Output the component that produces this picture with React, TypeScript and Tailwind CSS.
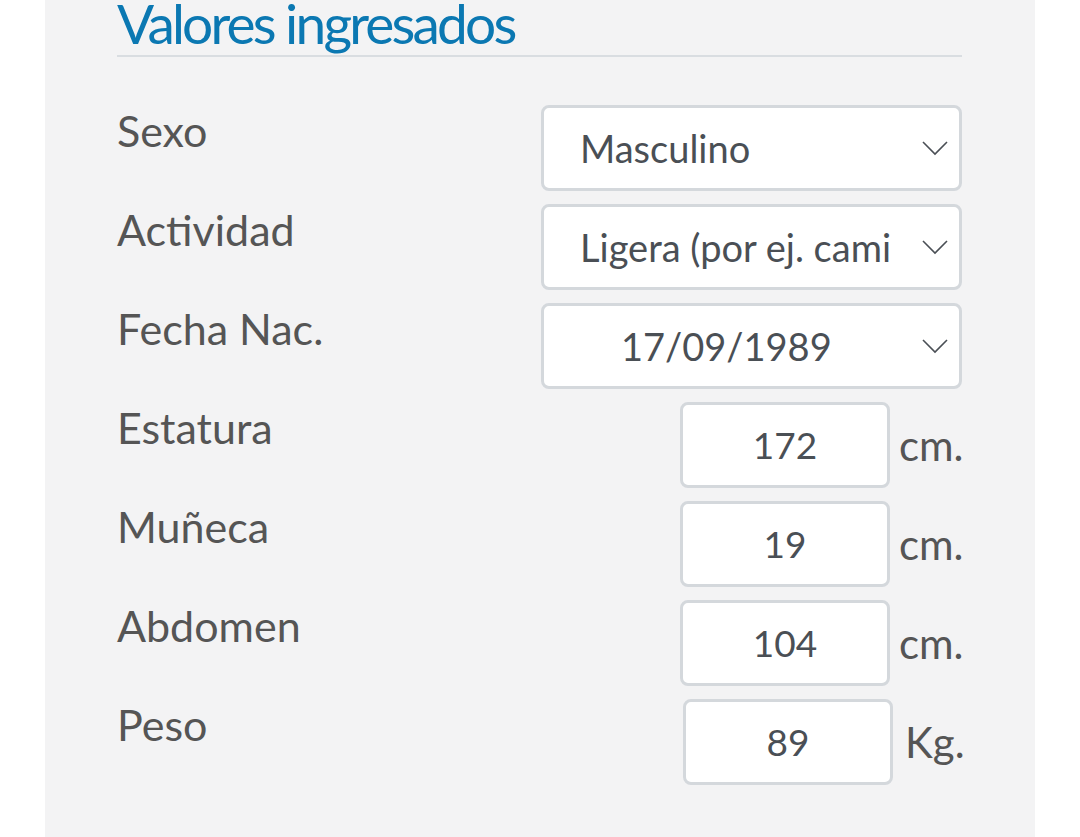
import React from "react";

const font = { fontFamily: "Lato, 'Noto Sans', sans-serif" };

function Chevron() {
  return (
    <svg width="28" height="16" viewBox="0 0 28 16" fill="none" className="shrink-0">
      <polyline points="2,2 14,14 26,2" stroke="#4a4f55" strokeWidth="1.6" fill="none" />
    </svg>
  );
}

function SelectRow({ label, value, center }: { label: string; value: string; center?: boolean }) {
  return (
    <div className="flex items-start justify-between h-[86px]">
      <div className="text-[43px] leading-[52px] text-[#555555]">{label}</div>
      <div className="w-[421px] h-[86px] bg-white border-[3px] border-[#d4d8dc] rounded-[8px] flex items-center pl-[36px] pr-[10px]">
        <div className={"flex-1 text-[38px] text-[#4a4f55] whitespace-nowrap overflow-hidden " + (center ? "pl-[41px]" : "")}>{value}</div>
        <Chevron />
      </div>
    </div>
  );
}

function InputRow({ label, value, unit, kg }: { label: string; value: string; unit: string; kg?: boolean }) {
  return (
    <div className="flex items-start justify-between h-[86px]">
      <div className="text-[43px] leading-[52px] text-[#555555]">{label}</div>
      <div className={"flex items-center h-[86px] " + (kg ? "gap-[12px]" : "gap-[9px]")}>
        <div className="w-[210px] h-[86px] bg-white border-[3px] border-[#d4d8dc] rounded-[8px] flex items-center justify-center text-[37px] text-[#4a4f55]">
          {value}
        </div>
        <div className={"text-[42px] text-[#555555] " + (kg ? "w-[57px]" : "w-[63px]")}>{unit}</div>
      </div>
    </div>
  );
}

export default function App() {
  return (
    <div className="w-[1080px] h-[837px] bg-white overflow-hidden" style={font}>
      <div className="ml-[45px] w-[990px] h-[837px] bg-[#f3f3f4] pl-[72px] pr-[73px] pt-0">
        <div className="text-[55px] leading-[47px] text-[#0b78b2] tracking-[-2.8px] whitespace-nowrap">Valores ingresados</div>
        <div className="h-[2px] bg-[#d9dde1] mt-[8px]" />
        <div className="mt-[48px] flex flex-col gap-[13px]">
          <SelectRow label="Sexo" value="Masculino" />
          <SelectRow label="Actividad" value="Ligera (por ej. cami" />
          <SelectRow label="Fecha Nac." value="17/09/1989" center />
          <InputRow label="Estatura" value="172" unit="cm." />
          <InputRow label="Muñeca" value="19" unit="cm." />
          <InputRow label="Abdomen" value="104" unit="cm." />
          <InputRow label="Peso" value="89" unit="Kg." kg />
        </div>
      </div>
    </div>
  );
}
